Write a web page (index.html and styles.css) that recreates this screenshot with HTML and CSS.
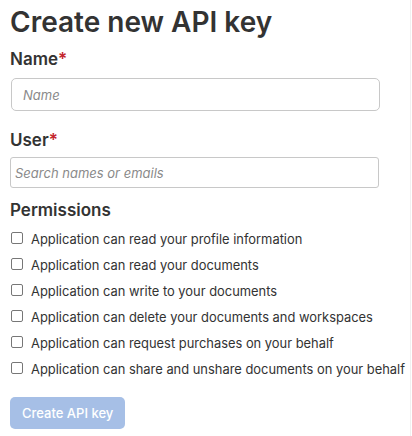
FILE: index.html
```html
<!DOCTYPE html>
<html>
<head>
<meta charset="utf-8">
<link rel="stylesheet" href="styles.css">
</head>
<body>
<div class="page">
  <h1 class="title">Create new API key</h1>
  <label class="field-label">Name<span class="req">*</span></label>
  <input class="input input-name" type="text" placeholder="Name">
  <label class="field-label label-user">User<span class="req">*</span></label>
  <input class="input input-user" type="text" placeholder="Search names or emails">
  <div class="section-label">Permissions</div>
  <ul class="perms">
    <li class="perm"><span class="box"></span><span>Application can read your profile information</span></li>
    <li class="perm"><span class="box"></span><span>Application can read your documents</span></li>
    <li class="perm"><span class="box"></span><span>Application can write to your documents</span></li>
    <li class="perm"><span class="box"></span><span>Application can delete your documents and workspaces</span></li>
    <li class="perm"><span class="box"></span><span>Application can request purchases on your behalf</span></li>
    <li class="perm"><span class="box"></span><span>Application can share and unshare documents on your behalf</span></li>
  </ul>
  <button class="btn" disabled>Create API key</button>
</div>
</body>
</html>
```
FILE: styles.css
```css
html, body {
  margin: 0;
  padding: 0;
  background: #ffffff;
}
body {
  font-family: Inter, "Noto Sans", sans-serif;
  color: #333333;
}
.page {
  width: 411px;
  height: 436px;
  box-sizing: border-box;
  border-right: 1px solid #f0f0f0;
  padding: 4px 0 0 10px;
  display: flex;
  flex-direction: column;
  align-items: flex-start;
}
.title {
  margin: 0;
  font-size: 28px;
  font-weight: 600;
  line-height: 36px;
  color: #333;
}
.field-label {
  margin-top: 8px;
  font-size: 17px;
  font-weight: 600;
  line-height: 22px;
}
.label-user {
  margin-top: 18px;
}
.req {
  color: #c4262e;
}
.input {
  margin-top: 8px;
  width: 369px;
  height: 33px;
  box-sizing: border-box;
  border: 1px solid #c8c8c8;
  border-radius: 5px;
  font-family: inherit;
  font-size: 13px;
  font-style: italic;
  color: #333;
  outline: none;
}
.input::placeholder {
  color: #8a8a8a;
  font-style: italic;
}
.input-name {
  margin-left: 1px;
  padding: 0 11px;
}
.input-user {
  margin-top: 6px;
  height: 31px;
  border-radius: 3px;
  padding: 0 4px;
}
.section-label {
  margin-top: 11px;
  font-size: 17px;
  font-weight: 600;
  line-height: 22px;
}
.perms {
  list-style: none;
  margin: 5px 0 0 0;
  padding: 0;
  display: flex;
  flex-direction: column;
}
.perm {
  display: flex;
  align-items: center;
  gap: 8px;
  height: 26px;
  font-size: 12.9px;
  color: #333;
}
.box {
  width: 10px;
  height: 10px;
  border: 1px solid #777;
  border-radius: 2px;
  margin-left: 1px;
  margin-top: -2px;
  flex: none;
}
.btn {
  margin-top: 15px;
  height: 32px;
  padding: 0 12px;
  border: none;
  border-radius: 5px;
  background: #a6bfe6;
  color: #ffffff;
  font-family: inherit;
  font-size: 13px;
  font-weight: 500;
}
```
